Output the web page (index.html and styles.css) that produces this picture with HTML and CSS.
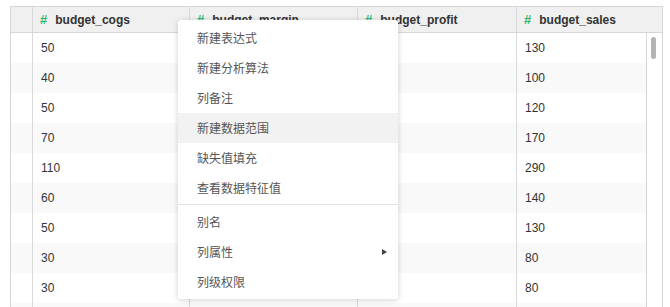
FILE: index.html
```html
<!DOCTYPE html>
<html lang="zh-CN">
<head>
    <meta charset="UTF-8">
    <meta name="viewport" content="width=device-width, initial-scale=1.0">
    <title>数据表</title>
    <link rel="stylesheet" href="styles.css">
</head>
<body>

    <!-- Tableau des données -->
    <div class="table">
        <div class="head">
            <div class="cell num"></div>
            <div class="cell"><span class="hash">#</span>budget_cogs</div>
            <div class="cell"><span class="hash">#</span>budget_margin</div>
            <div class="cell"><span class="hash">#</span>budget_profit</div>
            <div class="cell plain"><span class="hash">#</span>budget_sales</div>
            <div class="cell last"></div>
        </div>
        <div class="body">
            <div class="rows">
                <div class="row"><div class="cell num"></div><div class="cell">50</div><div class="cell"></div><div class="cell"></div><div class="cell">130</div></div>
                <div class="row"><div class="cell num"></div><div class="cell">40</div><div class="cell"></div><div class="cell"></div><div class="cell">100</div></div>
                <div class="row"><div class="cell num"></div><div class="cell">50</div><div class="cell"></div><div class="cell"></div><div class="cell">120</div></div>
                <div class="row"><div class="cell num"></div><div class="cell">70</div><div class="cell"></div><div class="cell"></div><div class="cell">170</div></div>
                <div class="row"><div class="cell num"></div><div class="cell">110</div><div class="cell"></div><div class="cell"></div><div class="cell">290</div></div>
                <div class="row"><div class="cell num"></div><div class="cell">60</div><div class="cell"></div><div class="cell"></div><div class="cell">140</div></div>
                <div class="row"><div class="cell num"></div><div class="cell">50</div><div class="cell"></div><div class="cell"></div><div class="cell">130</div></div>
                <div class="row"><div class="cell num"></div><div class="cell">30</div><div class="cell"></div><div class="cell"></div><div class="cell">80</div></div>
                <div class="row"><div class="cell num"></div><div class="cell">30</div><div class="cell"></div><div class="cell"></div><div class="cell">80</div></div>
                <div class="row"><div class="cell num"></div><div class="cell"></div><div class="cell"></div><div class="cell"></div><div class="cell"></div></div>
            </div>
            <div class="track"><div class="thumb"></div></div>
        </div>
    </div>

    <!-- Menu contextuel -->
    <ul class="menu">
        <li>新建表达式</li>
        <li>新建分析算法</li>
        <li>列备注</li>
        <li class="active">新建数据范围</li>
        <li>缺失值填充</li>
        <li>查看数据特征值</li>
        <li class="divider"></li>
        <li>别名</li>
        <li class="sub">列属性</li>
        <li>列级权限</li>
    </ul>

</body>
</html>
```

FILE: styles.css
```css
/* Corps de la page */
html, body {
    overflow: hidden;
}

body {
    margin: 0;
    padding: 6px 8px 0 10px;
    font-family: 'Liberation Sans', 'Noto Sans CJK SC', sans-serif;
    font-size: 12px;
    color: #333;
    background: #fff;
}

/* Tableau */
.table {
    border: 1px solid #d6d6d6;
    border-bottom: none;
    width: 651px;
    height: 300px;
    overflow: hidden;
}

.head {
    display: grid;
    grid-template-columns: 22px 157px 168px 159px 131px 14px;
    height: 25px;
    background: #f0f0f0;
    border-bottom: 1px solid #d6d6d6;
    font-weight: bold;
    color: #333;
}

.head .cell {
    display: flex;
    align-items: center;
    padding-left: 7px;
    border-right: 1px solid #d9d9d9;
}

.head .cell.num {
    padding: 0;
}

.head .cell.plain {
    border-right-color: transparent;
}

.head .cell.last {
    border-right: none;
    padding: 0;
}

.hash {
    color: #2cb56d;
    font-size: 13px;
    margin-right: 8px;
}

.body {
    display: flex;
}

.rows {
    width: 636px;
}

.row {
    display: grid;
    grid-template-columns: 22px 157px 168px 159px 130px;
    height: 30px;
    border-right: 1px solid #d6d6d6;
}

.row:nth-child(even) {
    background: #f9f9f9;
}

.row .cell {
    display: flex;
    align-items: center;
    padding-left: 8px;
    border-right: 1px solid #d9d9d9;
}

.row .cell:last-child {
    border-right: none;
}

.row .cell.num {
    padding: 0;
}

/* Barre de défilement */
.track {
    width: 14px;
    padding-top: 4px;
}

.thumb {
    width: 5px;
    height: 22px;
    margin-left: 4px;
    border-radius: 3px;
    background: #b3b3b3;
}

/* Menu contextuel */
.menu {
    position: absolute;
    left: 178px;
    top: 20px;
    width: 220px;
    margin: 0;
    padding: 3px 0 2px;
    list-style: none;
    background: #fff;
    border-radius: 3px;
    box-shadow: 0 1px 6px rgba(0, 0, 0, 0.18);
    font-family: 'Noto Sans CJK SC', sans-serif;
    font-size: 12px;
    color: #555;
}

.menu li {
    height: 30px;
    line-height: 30px;
    padding-left: 19px;
    position: relative;
}

.menu li.active {
    background: #f2f2f2;
}

.menu li.divider {
    height: 1px;
    padding: 0;
    margin: 1px 0 2px;
    background: #e2e2e2;
}

.menu li.sub::after {
    content: '';
    position: absolute;
    right: 11px;
    top: 12px;
    border-left: 5px solid #444;
    border-top: 3.5px solid transparent;
    border-bottom: 3.5px solid transparent;
}
```
